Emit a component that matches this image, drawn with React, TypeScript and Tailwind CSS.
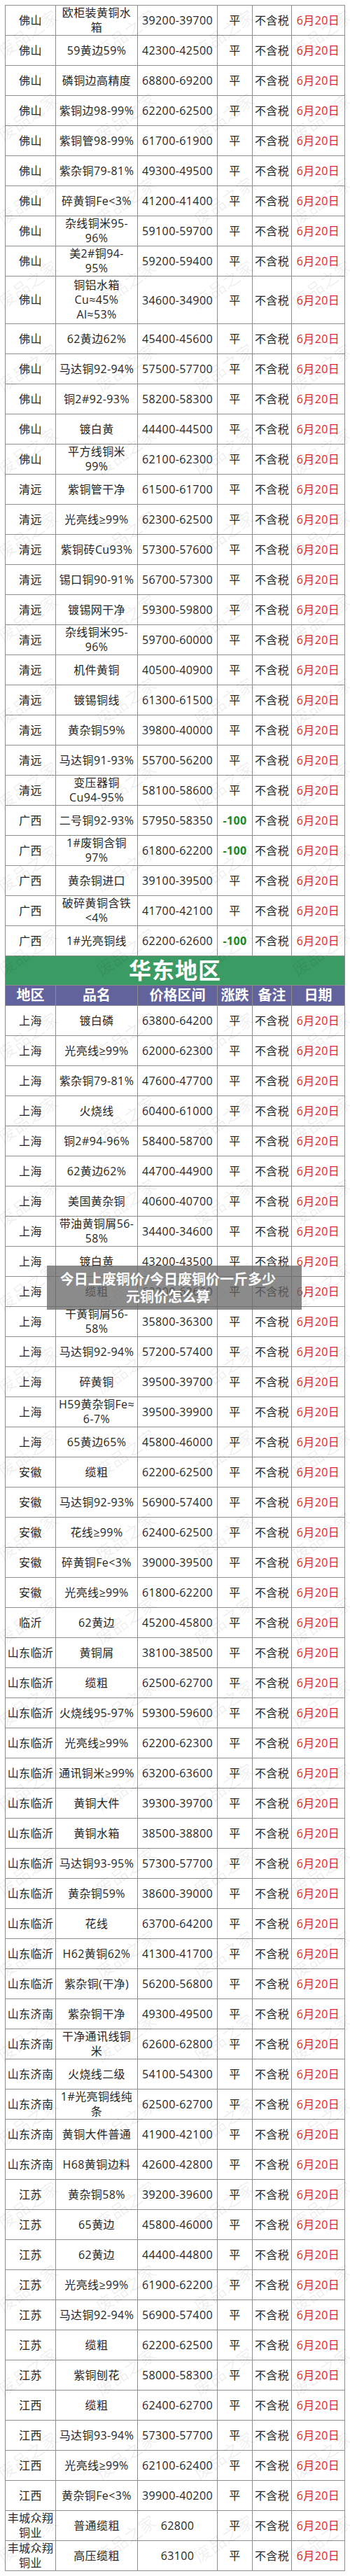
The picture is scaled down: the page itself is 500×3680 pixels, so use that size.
import React from "react";

type Row = { r: string; n: string; p: string; c?: string; tall?: boolean };

const west: Row[] = [
  { r: "佛山", n: "欧柜装黄铜水\n箱", p: "39200-39700" },
  { r: "佛山", n: "59黄边59%", p: "42300-42500" },
  { r: "佛山", n: "磷铜边高精度", p: "68800-69200" },
  { r: "佛山", n: "紫铜边98-99%", p: "62200-62500" },
  { r: "佛山", n: "紫铜管98-99%", p: "61700-61900" },
  { r: "佛山", n: "紫杂铜79-81%", p: "49300-49500" },
  { r: "佛山", n: "碎黄铜Fe<3%", p: "41200-41400" },
  { r: "佛山", n: "杂线铜米95-\n96%", p: "59100-59700" },
  { r: "佛山", n: "美2#铜94-\n95%", p: "59200-59400" },
  { r: "佛山", n: "铜铝水箱\nCu≈45%\nAl≈53%", p: "34600-34900", tall: true },
  { r: "佛山", n: "62黄边62%", p: "45400-45600" },
  { r: "佛山", n: "马达铜92-94%", p: "57500-57700" },
  { r: "佛山", n: "铜2#92-93%", p: "58200-58300" },
  { r: "佛山", n: "镀白黄", p: "44400-44500" },
  { r: "佛山", n: "平方线铜米\n99%", p: "62100-62300" },
  { r: "清远", n: "紫铜管干净", p: "61500-61700" },
  { r: "清远", n: "光亮线≥99%", p: "62300-62500" },
  { r: "清远", n: "紫铜砖Cu93%", p: "57300-57600" },
  { r: "清远", n: "锡口铜90-91%", p: "56700-57300" },
  { r: "清远", n: "镀锡网干净", p: "59300-59800" },
  { r: "清远", n: "杂线铜米95-\n96%", p: "59700-60000" },
  { r: "清远", n: "机件黄铜", p: "40500-40900" },
  { r: "清远", n: "镀锡铜线", p: "61300-61500" },
  { r: "清远", n: "黄杂铜59%", p: "39800-40000" },
  { r: "清远", n: "马达铜91-93%", p: "55700-56200" },
  { r: "清远", n: "变压器铜\nCu94-95%", p: "58100-58600" },
  { r: "广西", n: "二号铜92-93%", p: "57950-58350", c: "-100" },
  { r: "广西", n: "1#废铜含铜\n97%", p: "61800-62200", c: "-100" },
  { r: "广西", n: "黄杂铜进口", p: "39100-39500" },
  { r: "广西", n: "破碎黄铜含铁\n<4%", p: "41700-42100" },
  { r: "广西", n: "1#光亮铜线", p: "62200-62600", c: "-100" },
];

const east: Row[] = [
  { r: "上海", n: "镀白磷", p: "63800-64200" },
  { r: "上海", n: "光亮线≥99%", p: "62000-62300" },
  { r: "上海", n: "紫杂铜79-81%", p: "47600-47700" },
  { r: "上海", n: "火烧线", p: "60400-61000" },
  { r: "上海", n: "铜2#94-96%", p: "58400-58700" },
  { r: "上海", n: "62黄边62%", p: "44700-44900" },
  { r: "上海", n: "美国黄杂铜", p: "40600-40700" },
  { r: "上海", n: "带油黄铜屑56-\n58%", p: "34400-34600" },
  { r: "上海", n: "镀白黄", p: "43200-43500" },
  { r: "上海", n: "缆粗", p: "62200-62620" },
  { r: "上海", n: "干黄铜屑56-\n58%", p: "35800-36300" },
  { r: "上海", n: "马达铜92-94%", p: "57200-57400" },
  { r: "上海", n: "碎黄铜", p: "39500-39700" },
  { r: "上海", n: "H59黄杂铜Fe≈\n6-7%", p: "39500-39900" },
  { r: "上海", n: "65黄边65%", p: "45800-46000" },
  { r: "安徽", n: "缆粗", p: "62200-62500" },
  { r: "安徽", n: "马达铜92-93%", p: "56900-57400" },
  { r: "安徽", n: "花线≥99%", p: "62400-62500" },
  { r: "安徽", n: "碎黄铜Fe<3%", p: "39000-39500" },
  { r: "安徽", n: "光亮线≥99%", p: "61800-62200" },
  { r: "临沂", n: "62黄边", p: "45200-45800" },
  { r: "山东临沂", n: "黄铜屑", p: "38100-38500" },
  { r: "山东临沂", n: "缆粗", p: "62500-62700" },
  { r: "山东临沂", n: "火烧线95-97%", p: "59300-59600" },
  { r: "山东临沂", n: "光亮线≥99%", p: "62200-62300" },
  { r: "山东临沂", n: "通讯铜米≥99%", p: "63200-63600" },
  { r: "山东临沂", n: "黄铜大件", p: "39300-39700" },
  { r: "山东临沂", n: "黄铜水箱", p: "38500-38800" },
  { r: "山东临沂", n: "马达铜93-95%", p: "57300-57700" },
  { r: "山东临沂", n: "黄杂铜59%", p: "38600-39000" },
  { r: "山东临沂", n: "花线", p: "63700-64200" },
  { r: "山东临沂", n: "H62黄铜62%", p: "41300-41700" },
  { r: "山东临沂", n: "紫杂铜(干净)", p: "56200-56800" },
  { r: "山东济南", n: "紫杂铜干净", p: "49300-49500" },
  { r: "山东济南", n: "干净通讯线铜\n米", p: "62600-62800" },
  { r: "山东济南", n: "火烧线二级", p: "54100-54300" },
  { r: "山东济南", n: "1#光亮铜线纯\n条", p: "62500-62700" },
  { r: "山东济南", n: "黄铜大件普通", p: "41900-42100" },
  { r: "山东济南", n: "H68黄铜边料", p: "42600-42800" },
  { r: "江苏", n: "黄杂铜58%", p: "39200-39600" },
  { r: "江苏", n: "65黄边", p: "45800-46000" },
  { r: "江苏", n: "62黄边", p: "44400-44800" },
  { r: "江苏", n: "光亮线≥99%", p: "61900-62200" },
  { r: "江苏", n: "马达铜92-94%", p: "56900-57400" },
  { r: "江苏", n: "缆粗", p: "62200-62500" },
  { r: "江苏", n: "紫铜刨花", p: "58000-58300" },
  { r: "江西", n: "缆粗", p: "62400-62700" },
  { r: "江西", n: "马达铜93-94%", p: "57300-57700" },
  { r: "江西", n: "光亮线≥99%", p: "62100-62400" },
  { r: "江西", n: "黄杂铜Fe<3%", p: "39900-40200" },
  { r: "丰城众翔\n铜业", n: "普通缆粗", p: "62800" },
  { r: "丰城众翔\n铜业", n: "高压缆粗", p: "63100" },
];

const cell =
  "flex items-center justify-center text-center whitespace-pre border-r border-b border-[#8e8e8e]";

function DataRow({ row }: { row: Row }) {
  return (
    <div
      className={`grid grid-cols-[72px_117px_114px_50px_56px_76px] ${
        row.tall ? "h-[68px]" : "h-[43px]"
      }`}
    >
      <div className={`${cell} leading-[21px]`}>{row.r}</div>
      <div className={`${cell} leading-[21px]`}>{row.n}</div>
      <div className={cell}>{row.p}</div>
      {row.c ? (
        <div className={`${cell} font-bold text-[#1e8a1e]`}>{row.c}</div>
      ) : (
        <div className={cell}>平</div>
      )}
      <div className={cell}>不含税</div>
      <div className={`${cell} text-[#e5222e]`}>6月20日</div>
    </div>
  );
}

const headers = ["地区", "品名", "价格区间", "涨跌", "备注", "日期"];

function Watermarks() {
  const ys: number[] = [];
  for (let i = 0; i < 31; i++) ys.push(48 + i * 119.3);
  const xs = [40, 180, 320, 460];
  return (
    <div className="pointer-events-none absolute inset-0 overflow-hidden">
      {ys.map((y, i) =>
        xs.map((x, j) => (
          <span
            key={`${i}-${j}`}
            className="absolute -translate-x-1/2 -translate-y-1/2 -rotate-[35deg] whitespace-nowrap text-[24px] leading-none text-[rgba(0,0,0,0.07)]"
            style={{ left: x, top: y }}
          >
            废品之家
          </span>
        ))
      )}
    </div>
  );
}

export default function App() {
  return (
    <div className="relative w-[500px] bg-white p-[7px] font-['Open_Sans','Noto_Sans_CJK_SC',sans-serif] text-[16px] tracking-[0.4px] text-[#262626]">
      <div className="w-[486px] border-l border-t border-[#8e8e8e]">
        {west.map((row, i) => (
          <DataRow key={`w${i}`} row={row} />
        ))}
        <div className="flex h-[42px] items-center justify-center border-r border-b border-[#8e8e8e] bg-[#3a9b64] pb-[2px] text-[32px] font-bold leading-none tracking-[1px] text-white">
          华东地区
        </div>
        <div className="grid h-[29px] grid-cols-[72px_117px_114px_50px_56px_76px] bg-[#62629c]">
          {headers.map((h) => (
            <div
              key={h}
              className="flex items-center justify-center whitespace-nowrap border-r border-b border-[#8e8e8e] text-[20px] font-bold leading-none tracking-normal text-white"
            >
              {h}
            </div>
          ))}
        </div>
        {east.map((row, i) => (
          <DataRow key={`e${i}`} row={row} />
        ))}
      </div>
      <Watermarks />
      <div className="absolute left-[67px] top-[1808px] h-[63px] w-[364px] bg-[rgba(100,100,100,0.75)] pr-[18px] pt-[7px] text-center text-[20px] font-bold leading-[25px] tracking-normal text-white">
        <div>今日上废铜价/今日废铜价一斤多少</div>
        <div>元铜价怎么算</div>
      </div>
    </div>
  );
}
